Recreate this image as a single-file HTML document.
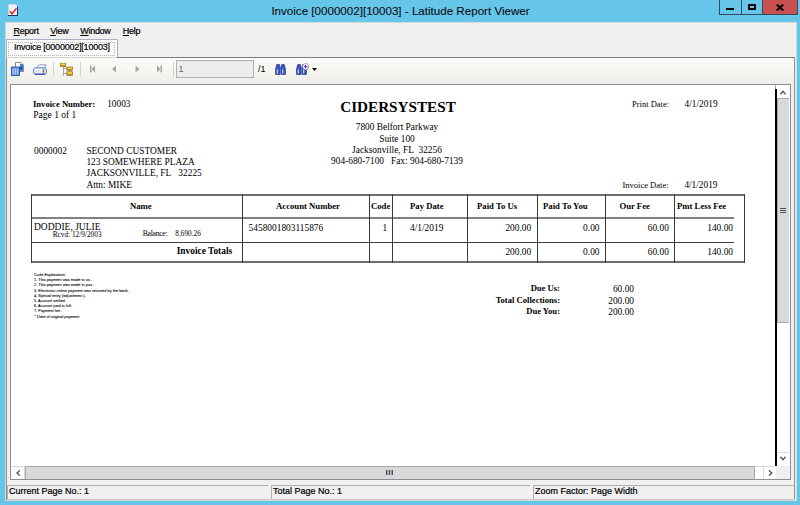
<!DOCTYPE html><html><head><meta charset="utf-8"><style>html,body{margin:0;padding:0}body{width:800px;height:505px;position:relative;overflow:hidden;background:#66c6ea}.t{position:absolute;white-space:pre}.r{position:absolute}u{text-decoration:underline;text-underline-offset:1px}</style></head><body><svg class="r" style="left:8px;top:4px" width="11" height="12" viewBox="0 0 11 12"><path d="M0.5 0.5h7l2 2v9h-9z" fill="#eef4fb" stroke="#c8d4e8"/><path d="M9.5 2.5v9.5M0 11.5h10" stroke="#2c2c78" stroke-width="1"/><path d="M1.8 7.2l2.3 2.6 4.4-5.6" fill="none" stroke="#e8281c" stroke-width="1.4"/></svg>
<div class="t" style="top:4.58px;font-family:'Liberation Sans', sans-serif;font-size:11.6px;line-height:11.6px;font-weight:400;color:#101010;left:100.5px;width:600px;text-align:center;-webkit-text-stroke:0.1px #000;">Invoice [0000002][10003] - Latitude Report Viewer</div>
<div class="r" style="left:719px;top:0px;width:22px;height:15px;box-sizing:border-box;border:1px solid #3b4b55;border-top:none;border-right:none"></div>
<div class="r" style="left:726px;top:8px;width:8px;height:2px;background:#000"></div>
<div class="r" style="left:741px;top:0px;width:21px;height:15px;box-sizing:border-box;border:1px solid #3b4b55;border-top:none;border-right:none"></div>
<div class="r" style="left:748px;top:4px;width:8px;height:6px;box-sizing:border-box;border:2px solid #000;border-top-width:2px"></div>
<div class="r" style="left:762px;top:0px;width:36px;height:15px;box-sizing:border-box;background:#c75050;border:1px solid #3b4b55;border-top:none"></div>
<svg class="r" style="left:776px;top:4px" width="8" height="7" viewBox="0 0 8 7"><path d="M0.8 0.5L7.2 6.5M7.2 0.5L0.8 6.5" stroke="#000" stroke-width="2"/></svg>
<div class="r" style="left:5px;top:22px;width:792px;height:479px;box-sizing:border-box;background:#f0f0f0;border:1px solid #d8d8d8;"></div>
<div class="r" style="left:6px;top:57px;width:789px;height:443px;box-sizing:border-box;border:1px solid #8f8f8f;border-top:none"></div>
<div class="r" style="left:6px;top:57px;width:789px;height:1px;background:#d4d4d4"></div>
<div class="r" style="left:117px;top:57px;width:678px;height:1px;background:#7c7c84"></div>
<div class="t" style="top:26.58px;font-family:'Liberation Sans', sans-serif;font-size:9px;line-height:9px;font-weight:400;color:#000;letter-spacing:-0.3px;left:13.5px;-webkit-text-stroke:0.2px #000;"><u>R</u>eport</div>
<div class="t" style="top:26.58px;font-family:'Liberation Sans', sans-serif;font-size:9px;line-height:9px;font-weight:400;color:#000;letter-spacing:-0.3px;left:50.2px;-webkit-text-stroke:0.2px #000;"><u>V</u>iew</div>
<div class="t" style="top:26.58px;font-family:'Liberation Sans', sans-serif;font-size:9px;line-height:9px;font-weight:400;color:#000;letter-spacing:-0.3px;left:80.3px;-webkit-text-stroke:0.2px #000;"><u>W</u>indow</div>
<div class="t" style="top:26.58px;font-family:'Liberation Sans', sans-serif;font-size:9px;line-height:9px;font-weight:400;color:#000;letter-spacing:-0.3px;left:122.8px;-webkit-text-stroke:0.2px #000;"><u>H</u>elp</div>
<div class="r" style="left:6px;top:39px;width:112px;height:18px;box-sizing:border-box;background:#fbfbfb;border:1px solid #a9b1c2;border-bottom:none"></div>
<div class="r" style="left:8px;top:42px;width:107px;height:14px;box-sizing:border-box;border:1px dotted #b4b4b4"></div>
<div class="t" style="top:43.38px;font-family:'Liberation Sans', sans-serif;font-size:9px;line-height:9px;font-weight:400;color:#000;letter-spacing:-0.22px;left:14px;-webkit-text-stroke:0.2px #000;">Invoice [0000002][10003]</div>
<div class="r" style="left:7px;top:58px;width:787px;height:26px;background:linear-gradient(#fbfbf7,#f5f5f0 60%,#ecece8)"></div>
<svg class="r" style="left:11px;top:62px" width="13" height="14" viewBox="0 0 13 14"><path d="M4.5 0.5h5.5l2.5 2.5v6.5h-8z" fill="#fdfdfd" stroke="#8a8a8a"/><rect x="9" y="2" width="3" height="7" fill="#3a7ad8"/><rect x="9.5" y="5.5" width="1.5" height="1.5" fill="#111"/><rect x="0.5" y="5" width="8" height="8.5" fill="#5a90e0" stroke="#3a5ab8"/><path d="M2 6.5v6M4.3 6.5v6M6.5 6.5v6" stroke="#d8e8ff" stroke-width="0.9"/></svg>
<svg class="r" style="left:33px;top:64px" width="14" height="11" viewBox="0 0 14 11"><path d="M2.5 4.8L6.2 0.8h6.8L11.2 4.8" fill="#f6f8fc" stroke="#8088a8" stroke-width="0.8"/><rect x="0.6" y="3.8" width="12.8" height="6.6" rx="2.2" fill="#f2f6fe" stroke="#4a68d0" stroke-width="0.9"/><path d="M1.8 10h10.4" stroke="#3436a8" stroke-width="1"/><rect x="1.8" y="5.2" width="6" height="2.5" fill="#dce8fa"/><rect x="9.6" y="4.9" width="1.8" height="2" fill="#30c040"/><rect x="9.6" y="6.9" width="1.8" height="1.8" fill="#e03030"/></svg>
<div class="r" style="left:53px;top:62px;width:1px;height:14px;background:#ccd4dc"></div>
<svg class="r" style="left:60px;top:63px" width="13" height="13" viewBox="0 0 13 13"><path d="M3.5 3.5v9M3.5 5.5h3.5M3.5 10.5h3.5" fill="none" stroke="#9a9aa0" stroke-width="0.9"/><rect x="0.3" y="0" width="5.4" height="3.4" fill="#fcd03a" stroke="#6a4a10" stroke-width="0.6"/><rect x="0.6" y="2.4" width="4.8" height="1" fill="#b07a10"/><rect x="6.9" y="4" width="5.4" height="3.2" fill="#fcd03a" stroke="#6a4a10" stroke-width="0.6"/><rect x="7.2" y="6.2" width="4.8" height="1" fill="#b07a10"/><rect x="6.9" y="8.8" width="5.4" height="3.4" fill="#fcd03a" stroke="#6a4a10" stroke-width="0.6"/><rect x="7.2" y="11.2" width="4.8" height="1" fill="#b07a10"/></svg>
<div class="r" style="left:80px;top:62px;width:1px;height:14px;background:#ccd4dc"></div>
<svg class="r" style="left:90px;top:65px" width="72" height="8" viewBox="0 0 72 8"><rect x="0" y="0.5" width="1.5" height="7" fill="#a5a5a5"/><path d="M5 0.5v7L1.5 4z" fill="#a5a5a5"/><path d="M26 0.5v7L22 4z" fill="#a5a5a5"/><path d="M45.5 0.5v7L49.5 4z" fill="#a5a5a5"/><path d="M67 0.5v7L70.5 4z" fill="#a5a5a5"/><rect x="70.5" y="0.5" width="1.5" height="7" fill="#a5a5a5"/></svg>
<div class="r" style="left:173px;top:62px;width:1px;height:15px;background:#c8d0d8"></div>
<div class="r" style="left:176px;top:60px;width:78px;height:18px;box-sizing:border-box;background:#ececec;border:1px solid #b0b0b0"></div>
<div class="t" style="top:65.38px;font-family:'Liberation Sans', sans-serif;font-size:9px;line-height:9px;font-weight:400;color:#6a6a6a;left:178.5px;">1</div>
<div class="t" style="top:65.38px;font-family:'Liberation Sans', sans-serif;font-size:9px;line-height:9px;font-weight:400;color:#000;left:258px;">/1</div>
<svg class="r" style="left:274.5px;top:63.5px" width="11" height="11" viewBox="0 0 11 11"><path d="M0.6 10.4V5.2L1.8 0.6h2.6L5 5.2v5.2zM6 10.4V5.2l.6-4.6h2.6L10.4 5.2v5.2z" fill="#3a58c8" stroke="#30308a" stroke-width="0.8"/><rect x="4.4" y="2.8" width="2.2" height="2" fill="#3a58c8"/><path d="M2.3 5.5v4.2M7.7 5.5v4.2" stroke="#dce8ff" stroke-width="1"/></svg>
<svg class="r" style="left:296px;top:63px" width="14" height="12" viewBox="0 0 14 12"><g transform="translate(0,1)"><path d="M0.6 10.4V5.2L1.8 0.6h2.6L5 5.2v5.2zM6 10.4V5.2l.6-4.6h2.6L10.4 5.2v5.2z" fill="#3a58c8" stroke="#30308a" stroke-width="0.8"/><rect x="4.4" y="2.8" width="2.2" height="2" fill="#3a58c8"/><path d="M2.3 5.5v4.2M7.7 5.5v4.2" stroke="#dce8ff" stroke-width="1"/></g><circle cx="9.6" cy="3.6" r="3.1" fill="#fff" stroke="#8a8a8a" stroke-width="0.8"/><path d="M9.6 1.8v3.6M7.8 3.6h3.6" stroke="#5038b8" stroke-width="1.1"/></svg>
<svg class="r" style="left:312px;top:68px" width="5" height="3" viewBox="0 0 5 3"><path d="M0 0h5L2.5 3z" fill="#000"/></svg>
<div class="r" style="left:10px;top:84px;width:781px;height:396px;box-sizing:border-box;background:#fff;border:1px solid #8c8c96"></div>
<div class="r" style="left:775px;top:89px;width:2px;height:377px;background:#000"></div>
<div class="r" style="left:775px;top:85px;width:1px;height:4px;background:#9aa8b8"></div>
<div class="r" style="left:777px;top:85px;width:13px;height:381px;background:#fff"></div>
<div class="r" style="left:777px;top:98px;width:12px;height:225px;box-sizing:border-box;background:#d8dada;border:1px solid #a8a8a8;border-right:none"></div>
<div class="r" style="left:777px;top:452px;width:12px;height:1px;background:#d8d8d8"></div>
<svg class="r" style="left:780px;top:90px" width="6" height="5" viewBox="0 0 6 5"><path d="M0.4 4.2L3 1.2L5.6 4.2" fill="none" stroke="#505050" stroke-width="1.3"/></svg>
<svg class="r" style="left:780px;top:456px" width="6" height="5" viewBox="0 0 6 5"><path d="M0.4 0.8L3 3.8L5.6 0.8" fill="none" stroke="#505050" stroke-width="1.3"/></svg>
<div class="r" style="left:780px;top:208px;width:6px;height:1px;background:#505058"></div>
<div class="r" style="left:780px;top:210px;width:6px;height:1px;background:#505058"></div>
<div class="r" style="left:780px;top:212px;width:6px;height:1px;background:#505058"></div>
<div class="r" style="left:11px;top:466px;width:764px;height:13px;background:#fff"></div>
<div class="r" style="left:11px;top:466px;width:764px;height:1px;background:#d8d8d8"></div>
<div class="r" style="left:25px;top:466px;width:730px;height:13px;box-sizing:border-box;background:#d8dada;border:1px solid #a8a8a8;border-bottom:none"></div>
<div class="r" style="left:763px;top:467px;width:1px;height:12px;background:#d8d8d8"></div>
<div class="r" style="left:24px;top:467px;width:1px;height:12px;background:#d8d8d8"></div>
<div class="r" style="left:776px;top:466px;width:14px;height:13px;background:#efefef"></div>
<svg class="r" style="left:15.5px;top:469.5px" width="5" height="6" viewBox="0 0 5 6"><path d="M3.8 0.4L1 3L3.8 5.6" fill="none" stroke="#404040" stroke-width="1.2"/></svg>
<svg class="r" style="left:767.5px;top:469.5px" width="5" height="6" viewBox="0 0 5 6"><path d="M1 0.4L3.8 3L1 5.6" fill="none" stroke="#404040" stroke-width="1.2"/></svg>
<svg class="r" style="left:386px;top:470px" width="7" height="5" viewBox="0 0 7 5"><path d="M0.75 0v5M3.5 0v5M6.25 0v5" stroke="#48484e" stroke-width="1.4"/></svg>
<div class="r" style="left:7px;top:485px;width:261px;height:14px;box-sizing:border-box;border-top:1px solid #b0b0b0;border-left:1px solid #b0b0b0"></div>
<div class="t" style="top:487.08px;font-family:'Liberation Sans', sans-serif;font-size:9px;line-height:9px;font-weight:400;color:#000;left:9px;-webkit-text-stroke:0.2px #000;">Current Page No.: 1</div>
<div class="r" style="left:271px;top:485px;width:259px;height:14px;box-sizing:border-box;border-top:1px solid #b0b0b0;border-left:1px solid #b0b0b0"></div>
<div class="t" style="top:487.08px;font-family:'Liberation Sans', sans-serif;font-size:9px;line-height:9px;font-weight:400;color:#000;left:273px;-webkit-text-stroke:0.2px #000;">Total Page No.: 1</div>
<div class="r" style="left:533px;top:485px;width:261px;height:14px;box-sizing:border-box;border-top:1px solid #b0b0b0;border-left:1px solid #b0b0b0"></div>
<div class="t" style="top:487.08px;font-family:'Liberation Sans', sans-serif;font-size:9px;line-height:9px;font-weight:400;color:#000;left:535px;-webkit-text-stroke:0.2px #000;">Zoom Factor: Page Width</div>
<div class="r" style="left:7px;top:499px;width:788px;height:1px;background:#c8c8c8"></div>
<div class="t" style="top:100.20px;font-family:'Liberation Serif', serif;font-size:8.6px;line-height:8.6px;font-weight:700;color:#000;left:33px;">Invoice Number:</div>
<div class="t" style="top:99.61px;font-family:'Liberation Serif', serif;font-size:9.3px;line-height:9.3px;font-weight:400;color:#000;left:107.2px;">10003</div>
<div class="t" style="top:110.74px;font-family:'Liberation Serif', serif;font-size:9.5px;line-height:9.5px;font-weight:400;color:#000;left:33.3px;">Page 1 of 1</div>
<div class="t" style="top:99.27px;font-family:'Liberation Serif', serif;font-size:15.2px;line-height:15.2px;font-weight:700;color:#000;left:98px;width:600px;text-align:center;">CIDERSYSTEST</div>
<div class="t" style="top:123.17px;font-family:'Liberation Serif', serif;font-size:9.35px;line-height:9.35px;font-weight:400;color:#000;left:97px;width:600px;text-align:center;">7800 Belfort Parkway</div>
<div class="t" style="top:134.52px;font-family:'Liberation Serif', serif;font-size:9.35px;line-height:9.35px;font-weight:400;color:#000;left:97px;width:600px;text-align:center;">Suite 100</div>
<div class="t" style="top:145.87px;font-family:'Liberation Serif', serif;font-size:9.35px;line-height:9.35px;font-weight:400;color:#000;left:97px;width:600px;text-align:center;">Jacksonville, FL&nbsp; 32256</div>
<div class="t" style="top:157.22px;font-family:'Liberation Serif', serif;font-size:9.35px;line-height:9.35px;font-weight:400;color:#000;left:97px;width:600px;text-align:center;">904-680-7100&nbsp;&nbsp; Fax: 904-680-7139</div>
<div class="t" style="top:99.98px;font-family:'Liberation Serif', serif;font-size:8.5px;line-height:8.5px;font-weight:400;color:#000;left:632px;">Print Date:</div>
<div class="t" style="top:99.91px;font-family:'Liberation Serif', serif;font-size:9.3px;line-height:9.3px;font-weight:400;color:#000;left:684.6px;">4/1/2019</div>
<div class="t" style="top:146.53px;font-family:'Liberation Serif', serif;font-size:9.4px;line-height:9.4px;font-weight:400;color:#000;left:34px;">0000002</div>
<div class="t" style="top:146.53px;font-family:'Liberation Serif', serif;font-size:9.4px;line-height:9.4px;font-weight:400;color:#000;left:86.4px;">SECOND CUSTOMER</div>
<div class="t" style="top:157.93px;font-family:'Liberation Serif', serif;font-size:9.4px;line-height:9.4px;font-weight:400;color:#000;left:86.4px;">123 SOMEWHERE PLAZA</div>
<div class="t" style="top:169.33px;font-family:'Liberation Serif', serif;font-size:9.4px;line-height:9.4px;font-weight:400;color:#000;left:86.4px;">JACKSONVILLE, FL&nbsp;&nbsp; 32225</div>
<div class="t" style="top:180.73px;font-family:'Liberation Serif', serif;font-size:9.4px;line-height:9.4px;font-weight:400;color:#000;left:86.4px;">Attn: MIKE</div>
<div class="t" style="top:180.68px;font-family:'Liberation Serif', serif;font-size:8.5px;line-height:8.5px;font-weight:400;color:#000;left:622.5px;">Invoice Date:</div>
<div class="t" style="top:180.81px;font-family:'Liberation Serif', serif;font-size:9.3px;line-height:9.3px;font-weight:400;color:#000;left:684.4px;">4/1/2019</div>
<div class="r" style="left:31px;top:194px;width:714px;height:2px;background:#6e6e6e"></div>
<div class="r" style="left:31px;top:261px;width:714px;height:2px;background:#6e6e6e"></div>
<div class="r" style="left:31px;top:194px;width:1px;height:69px;background:#3a3a3a"></div>
<div class="r" style="left:744px;top:194px;width:1px;height:69px;background:#3a3a3a"></div>
<div class="r" style="left:32px;top:217px;width:702px;height:2px;background:#808080"></div>
<div class="r" style="left:31px;top:242px;width:703px;height:1px;background:#404040"></div>
<div class="r" style="left:242px;top:194px;width:1px;height:69px;background:#3a3a3a"></div>
<div class="r" style="left:369px;top:194px;width:1px;height:69px;background:#3a3a3a"></div>
<div class="r" style="left:392px;top:194px;width:1px;height:69px;background:#3a3a3a"></div>
<div class="r" style="left:467px;top:194px;width:1px;height:69px;background:#3a3a3a"></div>
<div class="r" style="left:537px;top:194px;width:1px;height:69px;background:#3a3a3a"></div>
<div class="r" style="left:605px;top:194px;width:1px;height:69px;background:#3a3a3a"></div>
<div class="r" style="left:674px;top:194px;width:1px;height:69px;background:#3a3a3a"></div>
<div class="t" style="top:201.71px;font-family:'Liberation Serif', serif;font-size:8.7px;line-height:8.7px;font-weight:700;color:#000;left:130px;">Name</div>
<div class="t" style="top:201.71px;font-family:'Liberation Serif', serif;font-size:8.7px;line-height:8.7px;font-weight:700;color:#000;left:276px;">Account Number</div>
<div class="t" style="top:201.71px;font-family:'Liberation Serif', serif;font-size:8.7px;line-height:8.7px;font-weight:700;color:#000;left:371px;">Code</div>
<div class="t" style="top:201.71px;font-family:'Liberation Serif', serif;font-size:8.7px;line-height:8.7px;font-weight:700;color:#000;left:410px;">Pay Date</div>
<div class="t" style="top:201.71px;font-family:'Liberation Serif', serif;font-size:8.7px;line-height:8.7px;font-weight:700;color:#000;left:477px;">Paid To Us</div>
<div class="t" style="top:201.71px;font-family:'Liberation Serif', serif;font-size:8.7px;line-height:8.7px;font-weight:700;color:#000;left:543px;">Paid To You</div>
<div class="t" style="top:201.71px;font-family:'Liberation Serif', serif;font-size:8.7px;line-height:8.7px;font-weight:700;color:#000;left:619.4px;">Our Fee</div>
<div class="t" style="top:201.71px;font-family:'Liberation Serif', serif;font-size:8.7px;line-height:8.7px;font-weight:700;color:#000;left:677px;">Pmt Less Fee</div>
<div class="t" style="top:222.84px;font-family:'Liberation Serif', serif;font-size:9.5px;line-height:9.5px;font-weight:400;color:#000;left:34px;">DODDIE, JULIE</div>
<div class="t" style="top:230.69px;font-family:'Liberation Serif', serif;font-size:7.3px;line-height:7.3px;font-weight:400;color:#000;left:52.7px;">Rcvd: 12/9/2003</div>
<div class="t" style="top:230.15px;font-family:'Liberation Serif', serif;font-size:7.7px;line-height:7.7px;font-weight:400;color:#000;letter-spacing:-0.3px;left:142.8px;">Balance:</div>
<div class="t" style="top:230.39px;font-family:'Liberation Serif', serif;font-size:7.3px;line-height:7.3px;font-weight:400;color:#000;left:175.3px;">8,690.26</div>
<div class="t" style="top:224.33px;font-family:'Liberation Serif', serif;font-size:9.4px;line-height:9.4px;font-weight:400;color:#000;left:248.6px;">5458001803115876</div>
<div class="t" style="top:224.33px;font-family:'Liberation Serif', serif;font-size:9.4px;line-height:9.4px;font-weight:400;color:#000;left:382.5px;">1</div>
<div class="t" style="top:224.33px;font-family:'Liberation Serif', serif;font-size:9.4px;line-height:9.4px;font-weight:400;color:#000;left:410px;">4/1/2019</div>
<div class="t" style="top:224.33px;font-family:'Liberation Serif', serif;font-size:9.4px;line-height:9.4px;font-weight:400;color:#000;right:268.79999999999995px;text-align:right;">200.00</div>
<div class="t" style="top:224.33px;font-family:'Liberation Serif', serif;font-size:9.4px;line-height:9.4px;font-weight:400;color:#000;right:200.5px;text-align:right;">0.00</div>
<div class="t" style="top:224.33px;font-family:'Liberation Serif', serif;font-size:9.4px;line-height:9.4px;font-weight:400;color:#000;right:131.20000000000005px;text-align:right;">60.00</div>
<div class="t" style="top:224.33px;font-family:'Liberation Serif', serif;font-size:9.4px;line-height:9.4px;font-weight:400;color:#000;right:67px;text-align:right;">140.00</div>
<div class="t" style="top:247.53px;font-family:'Liberation Serif', serif;font-size:9.4px;line-height:9.4px;font-weight:400;color:#000;right:268.79999999999995px;text-align:right;">200.00</div>
<div class="t" style="top:247.53px;font-family:'Liberation Serif', serif;font-size:9.4px;line-height:9.4px;font-weight:400;color:#000;right:200.5px;text-align:right;">0.00</div>
<div class="t" style="top:247.53px;font-family:'Liberation Serif', serif;font-size:9.4px;line-height:9.4px;font-weight:400;color:#000;right:131.20000000000005px;text-align:right;">60.00</div>
<div class="t" style="top:247.53px;font-family:'Liberation Serif', serif;font-size:9.4px;line-height:9.4px;font-weight:400;color:#000;right:67px;text-align:right;">140.00</div>
<div class="t" style="top:246.73px;font-family:'Liberation Serif', serif;font-size:9.4px;line-height:9.4px;font-weight:700;color:#000;left:176.7px;">Invoice Totals</div>
<div class="t" style="top:272.90px;font-family:'Liberation Sans', sans-serif;font-size:3.9px;line-height:3.9px;font-weight:400;color:#000;left:34px;-webkit-text-stroke:0.08px #000;">Code Explanation:</div>
<div class="t" style="top:278.10px;font-family:'Liberation Sans', sans-serif;font-size:3.9px;line-height:3.9px;font-weight:400;color:#000;left:34px;-webkit-text-stroke:0.08px #000;">1. This payment was made to us .</div>
<div class="t" style="top:283.30px;font-family:'Liberation Sans', sans-serif;font-size:3.9px;line-height:3.9px;font-weight:400;color:#000;left:34px;-webkit-text-stroke:0.08px #000;">2. This payment was made to you .</div>
<div class="t" style="top:288.50px;font-family:'Liberation Sans', sans-serif;font-size:3.9px;line-height:3.9px;font-weight:400;color:#000;left:34px;-webkit-text-stroke:0.08px #000;">3. Electronic online payment was returned by the bank .</div>
<div class="t" style="top:293.70px;font-family:'Liberation Sans', sans-serif;font-size:3.9px;line-height:3.9px;font-weight:400;color:#000;left:34px;-webkit-text-stroke:0.08px #000;">4. Special entry (adjustment ).</div>
<div class="t" style="top:298.90px;font-family:'Liberation Sans', sans-serif;font-size:3.9px;line-height:3.9px;font-weight:400;color:#000;left:34px;-webkit-text-stroke:0.08px #000;">5. Account settled.</div>
<div class="t" style="top:304.10px;font-family:'Liberation Sans', sans-serif;font-size:3.9px;line-height:3.9px;font-weight:400;color:#000;left:34px;-webkit-text-stroke:0.08px #000;">6. Account paid in full.</div>
<div class="t" style="top:309.30px;font-family:'Liberation Sans', sans-serif;font-size:3.9px;line-height:3.9px;font-weight:400;color:#000;left:34px;-webkit-text-stroke:0.08px #000;">7. Payment fee .</div>
<div class="t" style="top:314.50px;font-family:'Liberation Sans', sans-serif;font-size:3.9px;line-height:3.9px;font-weight:400;color:#000;left:34.5px;-webkit-text-stroke:0.08px #000;">* Date of original payment</div>
<div class="t" style="top:283.80px;font-family:'Liberation Serif', serif;font-size:8.6px;line-height:8.6px;font-weight:700;color:#000;right:240px;text-align:right;">Due Us:</div>
<div class="t" style="top:284.73px;font-family:'Liberation Serif', serif;font-size:9.4px;line-height:9.4px;font-weight:400;color:#000;right:166px;text-align:right;">60.00</div>
<div class="t" style="top:295.80px;font-family:'Liberation Serif', serif;font-size:8.6px;line-height:8.6px;font-weight:700;color:#000;right:240px;text-align:right;">Total Collections:</div>
<div class="t" style="top:296.73px;font-family:'Liberation Serif', serif;font-size:9.4px;line-height:9.4px;font-weight:400;color:#000;right:166px;text-align:right;">200.00</div>
<div class="t" style="top:306.80px;font-family:'Liberation Serif', serif;font-size:8.6px;line-height:8.6px;font-weight:700;color:#000;right:240px;text-align:right;">Due You:</div>
<div class="t" style="top:307.73px;font-family:'Liberation Serif', serif;font-size:9.4px;line-height:9.4px;font-weight:400;color:#000;right:166px;text-align:right;">200.00</div></body></html>
